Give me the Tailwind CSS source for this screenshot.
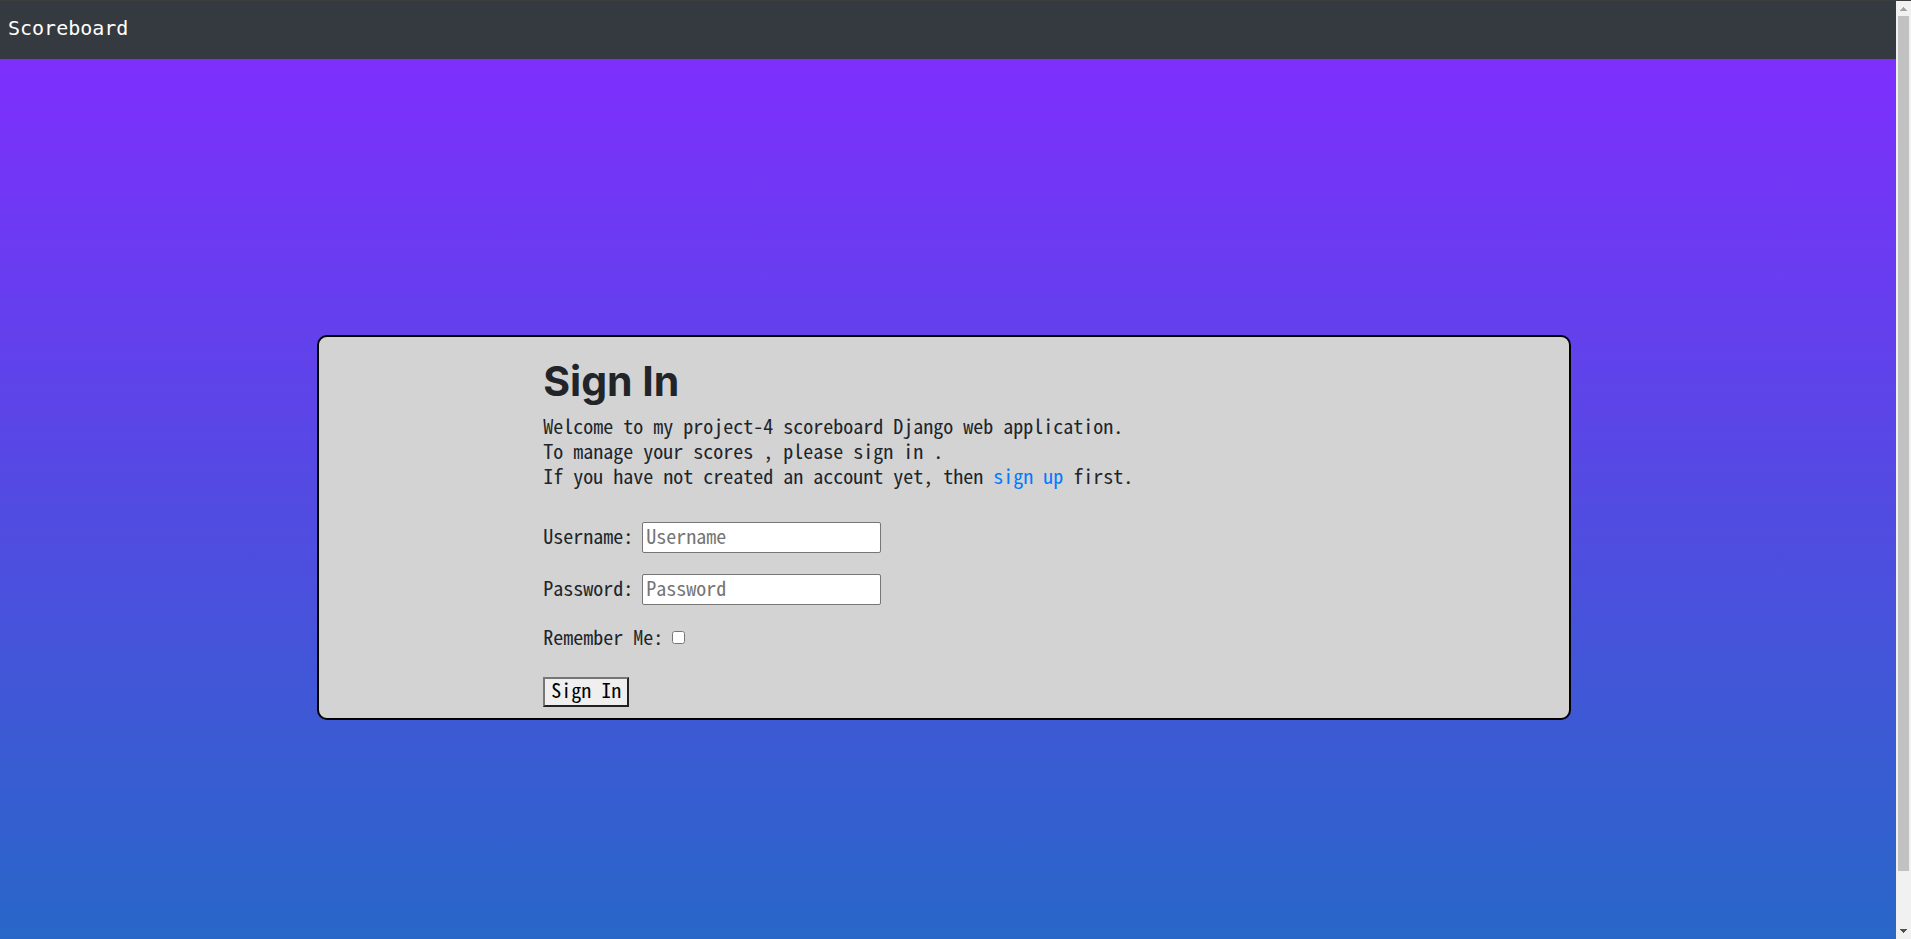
<!DOCTYPE html>
<html lang="en">
<head>
<meta charset="utf-8">
<meta name="viewport" content="width=device-width, initial-scale=1">
<title>Scoreboard</title>
<script src="https://cdn.jsdelivr.net/npm/@tailwindcss/browser@4"></script>
</head>
<body class="flex h-screen overflow-hidden border-t border-[#3c3c3c] font-['Noto_Sans_Mono_CJK_SC','Liberation_Mono',monospace] text-[20px] text-[#212529]">
  <div class="flex min-w-0 flex-1 flex-col">
    <nav class="flex h-[58px] shrink-0 items-center bg-[#343a40] px-2 pb-1">
      <a href="#" class="font-['DejaVu_Sans_Mono',monospace] text-[20px] leading-[24px] text-white">Scoreboard</a>
    </nav>
    <main class="flex flex-1 items-start justify-center bg-linear-to-b/srgb from-[#7e2ffd] to-[#2867c8] pt-[276px] pr-2">
      <section class="w-[66.4%] rounded-[10px] border-2 border-black bg-[#d3d3d3] pt-5 pr-4 pb-[11px] pl-56">
        <h1 class="font-['Inter',sans-serif] text-[41px] leading-[48px] font-bold">Sign In</h1>
        <p class="mt-2 leading-[25px]">Welcome to my project-4 scoreboard Django web application.<br>To manage your scores , please sign in .<br>If you have not created an account yet, then <a href="#" class="text-[#007bff]">sign up</a> first.</p>
        <form class="mt-[34px]">
          <div class="flex items-center gap-[9px]">
            <label for="username" class="pb-1 leading-[24px]">Username:</label>
            <input id="username" type="text" placeholder="Username" class="h-[31px] w-[239px] rounded-[2px] border border-[#767676] bg-white px-[3px] pb-1 placeholder:text-[#757575]">
          </div>
          <div class="mt-[21px] flex items-center gap-[9px]">
            <label for="password" class="pb-1 leading-[24px]">Password:</label>
            <input id="password" type="password" placeholder="Password" class="h-[31px] w-[239px] rounded-[2px] border border-[#767676] bg-white px-[3px] pb-1 placeholder:text-[#757575]">
          </div>
          <div class="mt-5 flex items-center gap-[9px]">
            <label for="remember" class="leading-[24px]">Remember Me:</label>
            <input id="remember" type="checkbox" class="size-[13px]">
          </div>
          <button type="submit" class="mt-7 block h-[30px] border-2 border-t-[#767676] border-r-[#212121] border-b-[#212121] border-l-[#767676] bg-[#efefef] px-[6px] pb-1 leading-[22px] text-black">Sign In</button>
        </form>
      </section>
    </main>
  </div>
  <div class="flex w-[15px] shrink-0 flex-col items-center bg-[#f1f1f1]" aria-hidden="true">
    <svg class="h-[15px] w-[15px] shrink-0" viewBox="0 0 15 15" shape-rendering="crispEdges" fill="#a3a3a3"><path d="M7 6h1v1h1v1h1v1h1v1H4V9h1V8h1V7h1z"/></svg>
    <div class="w-[11px] flex-[855] bg-[#c1c1c1]"></div>
    <div class="flex-[53]"></div>
    <svg class="h-[15px] w-[15px] shrink-0" viewBox="0 0 15 15" shape-rendering="crispEdges" fill="#505050"><path d="M4 5h7v1h-1v1H9v1H8v1H7V8H6V7H5V6H4z"/></svg>
  </div>
</body>
</html>
